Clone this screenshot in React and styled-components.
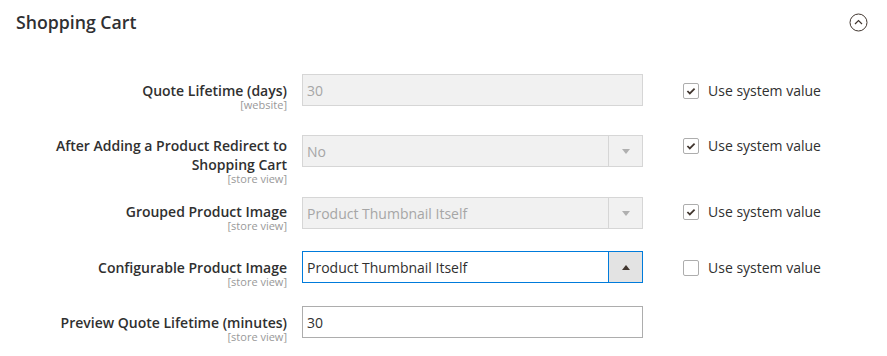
import React from 'react';
import styled, { createGlobalStyle } from 'styled-components';

const GlobalStyle = createGlobalStyle`
  body {
    margin: 0;
    background: #fff;
    font-family: "Open Sans", "Liberation Sans", sans-serif;
    color: #303030;
  }
`

const Section = styled.section`
  width: 887px;
`

const Header = styled.div`
  height: 44px;
  display: flex;
  align-items: center;
  justify-content: space-between;
  padding: 0 19px 0 16px;
`

const SectionTitle = styled.h2`
  margin: 0;
  font-size: 17.7px;
  font-weight: 600;
  color: #2f3033;
`

const Rows = styled.div`
  display: flex;
  flex-direction: column;
`

const Row = styled.div`
  display: grid;
  grid-template-columns: 302px 341px 244px;
  align-items: start;
  margin-top: ${p => p.$mt}px;
`

const LabelCell = styled.div`
  padding: ${p => p.$pad}px 15px 0 0;
  text-align: right;
`

const LabelText = styled.div`
  font-size: 14px;
  font-weight: 600;
  line-height: 19px;
  color: #303030;
`

const Scope = styled.div`
  font-size: 11px;
  line-height: 12px;
  margin-top: -1px;
  color: #999;
`

const Input = styled.div`
  box-sizing: border-box;
  height: 32px;
  display: flex;
  align-items: center;
  padding: 0 4px;
  font-size: 14px;
  border: 1px solid ${p => (p.$disabled ? '#d6d6d6' : '#adadad')};
  background: ${p => (p.$disabled ? '#f1f1f1' : '#fff')};
  color: ${p => (p.$disabled ? '#a6a6a6' : '#303030')};
`

const Select = styled.div`
  box-sizing: border-box;
  height: 32px;
  display: flex;
  align-items: stretch;
  font-size: 14px;
  border: 1px solid ${p => (p.$disabled ? '#d6d6d6' : p.$open ? '#007bdb' : '#adadad')};
  background: ${p => (p.$disabled ? '#f1f1f1' : '#fff')};
  color: ${p => (p.$disabled ? '#a6a6a6' : '#303030')};
`

const SelectValue = styled.div`
  flex: 1;
  display: flex;
  align-items: center;
  padding: 0 4px;
`

const SelectArrow = styled.div`
  width: 33px;
  display: flex;
  align-items: center;
  justify-content: center;
  border-left: 1px solid ${p => (p.$disabled ? '#d6d6d6' : p.$open ? '#007bdb' : '#adadad')};
  background: ${p => (p.$open ? '#e3e3e3' : 'transparent')};
`

const Triangle = styled.span`
  width: 0;
  height: 0;
  border-left: 4px solid transparent;
  border-right: 4px solid transparent;
  ${p => (p.$up
    ? 'border-bottom: 5px solid #41362f;'
    : 'border-top: 5px solid #b0b0b0;')}
`

const UseSystem = styled.label`
  display: flex;
  align-items: center;
  gap: 9px;
  padding: ${p => p.$pad}px 0 0 40px;
  font-size: 14px;
  line-height: 19px;
  color: #303030;
`

const Box = styled.span`
  box-sizing: border-box;
  width: 16px;
  height: 16px;
  border: 1px solid #adadad;
  border-radius: 2px;
  background: #fff;
  display: flex;
  align-items: center;
  justify-content: center;
`

const CollapseIcon = () => (
  <svg width="19" height="19" viewBox="0 0 19 19">
    <circle cx="9.5" cy="9.5" r="8.5" fill="none" stroke="#41362f" strokeWidth="1" />
    <path d="M6 11 L9.5 7.5 L13 11" fill="none" stroke="#41362f" strokeWidth="1.2" />
  </svg>
)

const Checkbox = ({ checked }) => (
  <Box>
    {checked && (
      <svg width="10" height="8" viewBox="0 0 12 10">
        <path d="M1.5 5 L4.5 8 L10.5 2" fill="none" stroke="#41362f" strokeWidth="2.2" />
      </svg>
    )}
  </Box>
)

const Field = ({ label, scope, pad = 7, mt, children, system }) => (
  <Row $mt={mt}>
    <LabelCell $pad={pad}>
      {label.map(line => <LabelText key={line}>{line}</LabelText>)}
      <Scope>{scope}</Scope>
    </LabelCell>
    <div>{children}</div>
    {system !== undefined && (
      <UseSystem $pad={pad}>
        <Checkbox checked={system} />
        Use system value
      </UseSystem>
    )}
  </Row>
)

const Dropdown = ({ value, disabled, open }) => (
  <Select $disabled={disabled} $open={open}>
    <SelectValue>{value}</SelectValue>
    <SelectArrow $disabled={disabled} $open={open}>
      <Triangle $up={open} />
    </SelectArrow>
  </Select>
)

export default function App() {
  return (
    <Section>
      <GlobalStyle />
      <Header>
        <SectionTitle>Shopping Cart</SectionTitle>
        <CollapseIcon />
      </Header>
      <Rows>
        <Field label={['Quote Lifetime (days)']} scope="[website]" mt={30} system={true}>
          <Input $disabled>30</Input>
        </Field>
        <Field
          label={['After Adding a Product Redirect to', 'Shopping Cart']}
          scope="[store view]"
          pad={1}
          mt={24}
          system={true}
        >
          <Dropdown value="No" disabled />
        </Field>
        <Field label={['Grouped Product Image']} scope="[store view]" pad={5} mt={12} system={true}>
          <Dropdown value="Product Thumbnail Itself" disabled />
        </Field>
        <Field label={['Configurable Product Image']} scope="[store view]" mt={19} system={false}>
          <Dropdown value="Product Thumbnail Itself" open />
        </Field>
        <Field label={['Preview Quote Lifetime (minutes)']} scope="[store view]" mt={18}>
          <Input>30</Input>
        </Field>
      </Rows>
    </Section>
  );
}
